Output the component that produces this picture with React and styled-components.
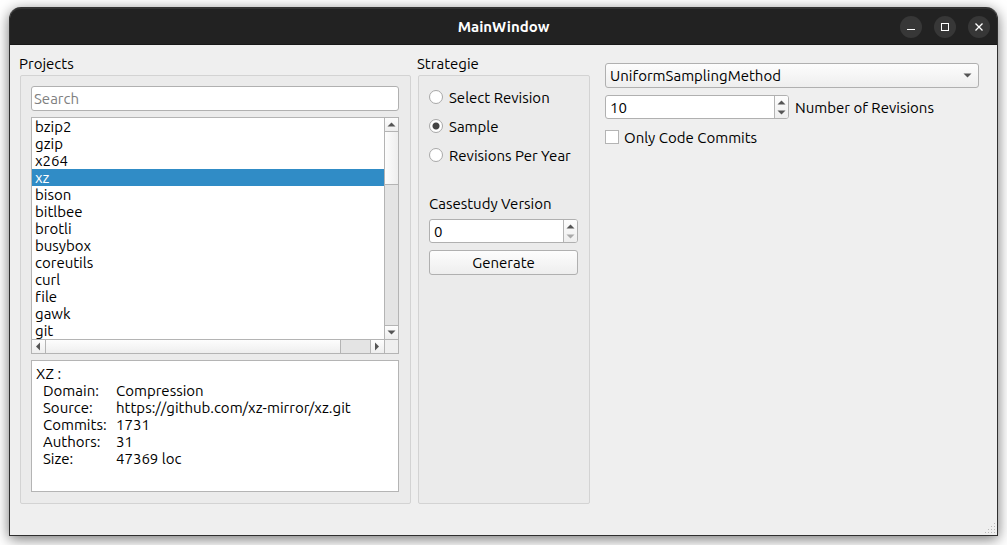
import { useState } from "react";
import styled, { createGlobalStyle, css } from "styled-components";

const GlobalStyle = createGlobalStyle`
  *, *::before, *::after {
    box-sizing: border-box;
  }

  body {
    margin: 0;
    background: #ffffff;
    color: #000000;
    font-family: Ubuntu, "Noto Sans", sans-serif;
    font-size: 15px;
    font-variant-ligatures: none;
    line-height: 17px;
  }

  button, input, select {
    font: inherit;
    color: inherit;
    margin: 0;
  }
`;

const Desktop = styled.div`
  display: flex;
  min-height: 100vh;
  padding: 7px 9px 9px;
  overflow: hidden;
`;

const Window = styled.div`
  flex: 1;
  min-width: 0;
  display: flex;
  flex-direction: column;
  background: #efefef;
  border: 1px solid #2f2f2f;
  border-top: 0;
  border-radius: 12px 12px 0 0;
  box-shadow: 0 3px 14px rgba(0, 0, 0, 0.55);
`;

const TitleBar = styled.header`
  display: grid;
  grid-template-columns: 1fr auto 1fr;
  align-items: center;
  height: 38px;
  padding: 0 7px;
  background: #222222;
  border-top: 2px solid #333333;
  border-bottom: 1px solid #181818;
  border-radius: 11px 11px 0 0;
`;

const Title = styled.h1`
  grid-column: 2;
  margin: 0;
  font-size: 15px;
  font-weight: 700;
  color: #ffffff;
`;

const WindowButtons = styled.div`
  display: flex;
  justify-content: flex-end;
  gap: 12px;
`;

const WindowButton = styled.button`
  display: flex;
  width: 22px;
  height: 22px;
  padding: 0;
  border: 0;
  border-radius: 50%;
  background: #373737;

  &:hover {
    background: #484848;
  }
`;

const Content = styled.main`
  flex: 1;
  display: grid;
  grid-template-columns: minmax(0, 398fr) 172px minmax(0, 389fr);
  padding: 9px 18px 9px 10px;
`;

const Column = styled.section`
  display: flex;
  flex-direction: column;
  margin-right: ${(props) => props.$space}px;
`;

const GroupTitle = styled.h2`
  margin: 0 0 2px -1px;
  font-size: 15px;
  font-weight: 400;
  line-height: 19px;
`;

const GroupBox = styled.div`
  flex: 1;
  display: flex;
  flex-direction: column;
  gap: ${(props) => props.$gap}px;
  padding: 10px 11px 11px 10px;
  background: #ebebeb;
  border: 1px solid #d3d3d3;
  border-radius: 2px;
`;

const field = css`
  background: #ffffff;
  border: 1px solid #b0b0b0;
  border-radius: 3px;
`;

const raised = css`
  background: linear-gradient(#fdfdfd, #eeeeee);
`;

const SearchInput = styled.input`
  ${field}
  width: 100%;
  height: 25px;
  padding: 0 2px;
  outline: 0;

  &::placeholder {
    color: #808080;
    opacity: 1;
  }
`;

const ListFrame = styled.div`
  flex: 1;
  display: grid;
  grid-template-columns: minmax(0, 1fr) 14px;
  grid-template-rows: 221px 14px;
  background: #ffffff;
  border: 1px solid #b4b4b4;
`;

const List = styled.ul`
  margin: 0;
  padding: 0;
  list-style: none;
  overflow: hidden;
`;

const ListItem = styled.li`
  padding: 0 3px;
  color: ${(props) => (props.$selected ? "#ffffff" : "#000000")};
  background: ${(props) => (props.$selected ? "#308cc6" : "transparent")};
  cursor: default;
`;

const ScrollBar = styled.div`
  display: flex;
  flex-direction: ${(props) => (props.$vertical ? "column" : "row")};
  background: #e4e4e4;
  border: 0 solid #b4b4b4;
  border-width: ${(props) => (props.$vertical ? "0 0 0 1px" : "1px 0 0 0")};
`;

const ScrollButton = styled.button`
  ${raised}
  display: flex;
  flex: 0 0 13px;
  padding: 0;
  border: 0;
`;

const ScrollTrack = styled.div`
  flex: 1;
  display: flex;
  flex-direction: inherit;
  border: 0 solid #b4b4b4;
  border-width: ${(props) => (props.$vertical ? "1px 0" : "0 1px")};
`;

const ScrollThumb = styled.div`
  flex: 0 0 ${(props) => props.$size};
  background: linear-gradient(${(props) => (props.$vertical ? "to right" : "to bottom")}, #fdfdfd, #eeeeee);
  border: 0 solid #b4b4b4;
  border-width: ${(props) => (props.$vertical ? "0 0 1px" : "0 1px 0 0")};
`;

const ScrollCorner = styled.div`
  background: #efefef;
  border: 1px solid #b4b4b4;
  border-width: 1px 0 0 1px;
`;

const Info = styled.div`
  height: 132px;
  padding: 4px;
  background: #ffffff;
  border: 1px solid #b4b4b4;
`;

const InfoList = styled.dl`
  display: grid;
  grid-template-columns: 73px 1fr;
  margin: 0;
  padding-left: 7px;

  dd {
    margin: 0;
  }
`;

const RadioList = styled.div`
  display: flex;
  flex-direction: column;
  gap: 6px;
  margin-bottom: 21px;
`;

const Option = styled.label`
  display: flex;
  align-items: flex-start;
  gap: ${(props) => props.$gap}px;
  height: 23px;
  padding-top: 3px;
`;

const Radio = styled.input`
  appearance: none;
  width: 14px;
  height: 14px;
  margin-top: 1px;
  border: 1px solid #a8a8a8;
  border-radius: 50%;
  background: #ffffff;

  &:checked {
    background: radial-gradient(circle, #444444 3px, #ffffff 4px);
  }
`;

const CheckBox = styled.input`
  appearance: none;
  width: 14px;
  height: 14px;
  margin-top: 1px;
  border: 1px solid #b4b4b4;
  background: #ffffff;

  &:checked {
    background: #444444;
    box-shadow: inset 0 0 0 3px #ffffff;
  }
`;

const SpinFrame = styled.div`
  ${field}
  display: flex;
  height: 24px;
  overflow: hidden;
`;

const SpinInput = styled.input`
  appearance: textfield;
  flex: 1;
  min-width: 0;
  padding: 0 4px;
  border: 0;
  outline: 0;
  background: transparent;

  &::-webkit-inner-spin-button {
    appearance: none;
  }
`;

const SpinButtons = styled.div`
  ${raised}
  display: flex;
  flex-direction: column;
  width: 14px;
  padding: 1px 0;
  border-left: 1px solid #b4b4b4;
`;

const SpinButton = styled.button`
  flex: 1;
  display: flex;
  align-items: center;
  justify-content: center;
  min-height: 0;
  padding: 0;
  border: 0;
  background: transparent;
`;

const PushButton = styled.button`
  ${field}
  ${raised}
  height: 25px;
  padding: 0;
`;

const Settings = styled.section`
  display: flex;
  flex-direction: column;
  gap: 7px;
  padding: 9px 0 0 15px;
`;

const SelectFrame = styled.div`
  position: relative;

  svg {
    position: absolute;
    top: 10px;
    right: 7px;
    pointer-events: none;
  }
`;

const Select = styled.select`
  ${field}
  ${raised}
  appearance: none;
  display: block;
  width: 100%;
  height: 25px;
  padding: 0 24px 0 4px;
  outline: 0;
`;

const SettingRow = styled.div`
  display: grid;
  grid-template-columns: 1fr 1fr;
  align-items: center;
  gap: 6px;
`;

const StatusBar = styled.footer`
  display: flex;
  align-items: flex-end;
  justify-content: flex-end;
  height: 22px;
`;

const arrowPaths = {
  up: "M2.5 8.5 L6.5 4.5 L10.5 8.5 Z",
  down: "M2.5 4.5 L6.5 8.5 L10.5 4.5 Z",
  left: "M8 2.5 L4 6.5 L8 10.5 Z",
  right: "M4 2.5 L8 6.5 L4 10.5 Z",
};

function Arrow({ direction }) {
  return (
    <svg width="13" height="13" viewBox="0 0 13 13" aria-hidden="true">
      <path d={arrowPaths[direction]} fill="#555555" />
    </svg>
  );
}

function SpinArrow({ direction, color = "#555555" }) {
  return (
    <svg width="9" height="5" viewBox="0 0 9 5" aria-hidden="true">
      <path d={direction === "up" ? "M0.5 4.5 L4.5 0.5 L8.5 4.5 Z" : "M0.5 0.5 L4.5 4.5 L8.5 0.5 Z"} fill={color} />
    </svg>
  );
}

function SpinBox({ id, value, onChange, min = 0 }) {
  return (
    <SpinFrame>
      <SpinInput id={id} type="number" min={min} value={value} onChange={(e) => onChange(Number(e.target.value))} />
      <SpinButtons>
        <SpinButton type="button" aria-label="Increase" onClick={() => onChange(value + 1)}>
          <SpinArrow direction="up" />
        </SpinButton>
        <SpinButton type="button" aria-label="Decrease" disabled={value <= min} onClick={() => onChange(value - 1)}>
          <SpinArrow direction="down" color={value <= min ? "#aaaaaa" : undefined} />
        </SpinButton>
      </SpinButtons>
    </SpinFrame>
  );
}

const projects = [
  "bzip2",
  "gzip",
  "x264",
  "xz",
  "bison",
  "bitlbee",
  "brotli",
  "busybox",
  "coreutils",
  "curl",
  "file",
  "gawk",
  "git",
];

const details = [
  ["Domain:", "Compression"],
  ["Source:", "https://github.com/xz-mirror/xz.git"],
  ["Commits:", "1731"],
  ["Authors:", "31"],
  ["Size:", "47369 loc"],
];

const strategies = ["Select Revision", "Sample", "Revisions Per Year"];

function ProjectList() {
  const [selected, setSelected] = useState("xz");

  return (
    <ListFrame>
      <List role="listbox" aria-label="Projects">
        {projects.map((name) => (
          <ListItem
            key={name}
            role="option"
            aria-selected={name === selected}
            $selected={name === selected}
            onClick={() => setSelected(name)}
          >
            {name}
          </ListItem>
        ))}
      </List>
      <ScrollBar $vertical>
        <ScrollButton type="button" aria-label="Scroll up">
          <Arrow direction="up" />
        </ScrollButton>
        <ScrollTrack $vertical>
          <ScrollThumb $vertical $size="53px" />
        </ScrollTrack>
        <ScrollButton type="button" aria-label="Scroll down">
          <Arrow direction="down" />
        </ScrollButton>
      </ScrollBar>
      <ScrollBar>
        <ScrollButton type="button" aria-label="Scroll left">
          <Arrow direction="left" />
        </ScrollButton>
        <ScrollTrack>
          <ScrollThumb $size="91%" />
        </ScrollTrack>
        <ScrollButton type="button" aria-label="Scroll right">
          <Arrow direction="right" />
        </ScrollButton>
      </ScrollBar>
      <ScrollCorner />
    </ListFrame>
  );
}

function App() {
  const [strategy, setStrategy] = useState("Sample");
  const [version, setVersion] = useState(0);
  const [revisions, setRevisions] = useState(10);

  return (
    <>
      <GlobalStyle />
      <Desktop>
        <Window>
          <TitleBar>
            <Title>MainWindow</Title>
            <WindowButtons>
              <WindowButton type="button" aria-label="Minimize">
                <svg width="22" height="22" viewBox="0 0 22 22">
                  <path d="M7 13.5 H15" stroke="#ffffff" />
                </svg>
              </WindowButton>
              <WindowButton type="button" aria-label="Maximize">
                <svg width="22" height="22" viewBox="0 0 22 22">
                  <rect x="7.5" y="7.5" width="7" height="7" fill="none" stroke="#ffffff" />
                </svg>
              </WindowButton>
              <WindowButton type="button" aria-label="Close">
                <svg width="22" height="22" viewBox="0 0 22 22">
                  <path d="M7.5 7.5 L14.5 14.5 M14.5 7.5 L7.5 14.5" stroke="#ffffff" strokeWidth="1.3" />
                </svg>
              </WindowButton>
            </WindowButtons>
          </TitleBar>

          <Content>
            <Column $space={7}>
              <GroupTitle>Projects</GroupTitle>
              <GroupBox $gap={6}>
                <SearchInput type="text" placeholder="Search" aria-label="Search" />
                <ProjectList />
                <Info>
                  XZ :
                  <InfoList>
                    {details.map(([label, value]) => [
                      <dt key={label}>{label}</dt>,
                      <dd key={value}>{value}</dd>,
                    ])}
                  </InfoList>
                </Info>
              </GroupBox>
            </Column>

            <Column $space={0}>
              <GroupTitle>Strategie</GroupTitle>
              <GroupBox $gap={7}>
                <RadioList>
                  {strategies.map((name) => (
                    <Option key={name} $gap={6}>
                      <Radio
                        type="radio"
                        name="strategy"
                        checked={name === strategy}
                        onChange={() => setStrategy(name)}
                      />
                      {name}
                    </Option>
                  ))}
                </RadioList>
                <label htmlFor="version">Casestudy Version</label>
                <SpinBox id="version" value={version} onChange={setVersion} />
                <PushButton type="button">Generate</PushButton>
              </GroupBox>
            </Column>

            <Settings>
              <SelectFrame>
                <Select aria-label="Sampling method">
                  <option>UniformSamplingMethod</option>
                </Select>
                <SpinArrow direction="down" />
              </SelectFrame>
              <SettingRow>
                <SpinBox id="revisions" value={revisions} onChange={setRevisions} />
                <label htmlFor="revisions">Number of Revisions</label>
              </SettingRow>
              <Option $gap={5}>
                <CheckBox type="checkbox" />
                Only Code Commits
              </Option>
            </Settings>
          </Content>

          <StatusBar>
            <svg width="12" height="12" viewBox="0 0 12 12" fill="#b8b8b8" aria-hidden="true">
              <path d="M9 0h1v1h-1z M6 3h1v1h-1z M9 3h1v1h-1z M3 6h1v1h-1z M6 6h1v1h-1z M9 6h1v1h-1z M0 9h1v1h-1z M3 9h1v1h-1z M6 9h1v1h-1z M9 9h1v1h-1z" />
            </svg>
          </StatusBar>
        </Window>
      </Desktop>
    </>
  );
}

export default App;
